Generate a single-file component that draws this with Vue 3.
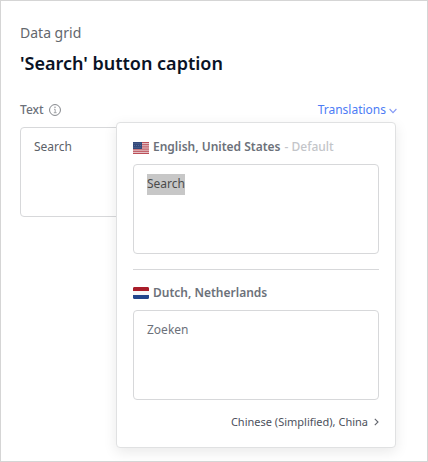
<script setup>
const stripes = [0, 2, 4, 6, 8, 10, 12]
const stars = [1, 3, 5, 7]
</script>

<template>
  <main class="panel">
    <p class="widget">Data grid</p>
    <h1 class="title">'Search' button caption</h1>
    <div class="field-head">
      <span class="label">Text</span>
      <svg class="info" viewBox="0 0 12 12" width="12" height="12">
        <circle cx="6" cy="6" r="5.45" fill="none" stroke="#83868b" />
        <path d="M5 5.3h1.2v3.4M4.8 8.7h2.8" fill="none" stroke="#9b9da1" stroke-width=".9" />
        <circle cx="6" cy="3.3" r=".7" fill="#83868b" />
      </svg>
      <button class="translations">
        <span>Translations</span>
        <svg class="caret" viewBox="0 0 8 6" width="8" height="6">
          <path d="M.6 1 4 4.6 7.4 1" fill="none" stroke="#8499f5" stroke-width="1.1" />
        </svg>
      </button>
    </div>
    <div class="anchor">
      <div class="box source">Search</div>
      <section class="popover">
        <div class="language">
          <svg class="flag flag-us" viewBox="0 0 16 12" width="16" height="12">
            <rect width="16" height="12" rx="1" fill="#ead5d8" />
            <rect v-for="y in stripes" :key="y" :y="y * 12 / 13" width="16" height=".92" fill="#b8434d" />
            <rect width="9" height="7" fill="#344a7c" />
            <g fill="#8290b3">
              <template v-for="x in stars" :key="x">
                <circle :cx="x" cy="1.5" r=".4" />
                <circle :cx="x + .7" cy="3.5" r=".4" />
                <circle :cx="x" cy="5.5" r=".4" />
              </template>
            </g>
          </svg>
          <span class="name">English, United States</span>
          <span class="default">- Default</span>
        </div>
        <div class="box"><span class="selected">Search</span></div>
        <hr class="divider" />
        <div class="language">
          <svg class="flag" viewBox="0 0 16 12" width="16" height="12">
            <rect width="16" height="12" rx="1" fill="#f7f7f7" />
            <path d="M1 0h14l1 1v3H0V1z" fill="#a91d2a" />
            <path d="M0 8h16v3l-1 1H1l-1-1z" fill="#21458c" />
          </svg>
          <span class="name">Dutch, Netherlands</span>
        </div>
        <div class="box">Zoeken</div>
        <div class="next">
          <span>Chinese (Simplified), China</span>
          <svg viewBox="0 0 5 8" width="5" height="8">
            <path d="M.8.8 4 4 .8 7.2" fill="none" stroke="#62656d" stroke-width="1.1" />
          </svg>
        </div>
      </section>
    </div>
  </main>
</template>

<style scoped>
.panel {
  box-sizing: border-box;
  width: 428px;
  height: 462px;
  padding: 22px 30px 0 19px;
  border: 1px solid #d5d5d5;
  background: #fff;
  font-family: "Noto Sans", "Open Sans", sans-serif;
  font-size: 12px;
  color: #6c717a;
  overflow: hidden;
}
.widget {
  margin: 0;
  font-size: 14px;
  line-height: 20px;
  color: #63676d;
}
.title {
  margin: 8px 0 0;
  font-size: 18px;
  line-height: 25px;
  font-weight: 600;
  color: #0a1325;
  white-space: nowrap;
}
.field-head {
  display: flex;
  align-items: center;
  height: 20px;
  margin-top: 24px;
}
.label {
  font-weight: 500;
  line-height: 20px;
}
.info {
  margin-left: 5px;
}
.translations {
  display: flex;
  align-items: center;
  gap: 3px;
  margin: 0 0 0 auto;
  padding: 0;
  border: 0;
  background: none;
  font: inherit;
  line-height: 20px;
  color: #4c7cf5;
}
.caret {
  margin-top: 1px;
}
.anchor {
  position: relative;
  margin-top: 7px;
}
.box {
  box-sizing: border-box;
  height: 90px;
  padding: 9px 13px;
  border: 1px solid #d7d8da;
  border-radius: 4px;
  line-height: 20px;
  background: #fff;
}
.source {
  width: 376px;
  color: #5c6168;
}
.popover {
  position: absolute;
  top: -5px;
  left: 96px;
  box-sizing: border-box;
  width: 280px;
  height: 326px;
  padding: 14px 16px 0;
  border: 1px solid #e0e1e2;
  border-radius: 4px;
  background: #fff;
  box-shadow: 0 4px 14px rgba(0, 0, 0, .09);
}
.language {
  display: flex;
  align-items: center;
  height: 20px;
  margin-bottom: 7px;
  line-height: 20px;
}
.flag {
  margin-right: 4px;
  filter: drop-shadow(0 0 .7px #777);
}
.flag-us {
  margin-top: 2px;
}
.name {
  font-weight: 600;
}
.default {
  margin-left: 4px;
  font-weight: 500;
  color: #c3c5c9;
}
.selected {
  display: inline-block;
  height: 21px;
  background: #c7c7c7;
  color: #4b4b4b;
}
.divider {
  height: 1px;
  margin: 15px 0 13px;
  border: 0;
  background: #d7d8da;
}
.next {
  display: flex;
  align-items: center;
  justify-content: flex-end;
  gap: 6px;
  margin-top: 12px;
  font-size: 11px;
  line-height: 20px;
  color: #4d515c;
}
</style>
